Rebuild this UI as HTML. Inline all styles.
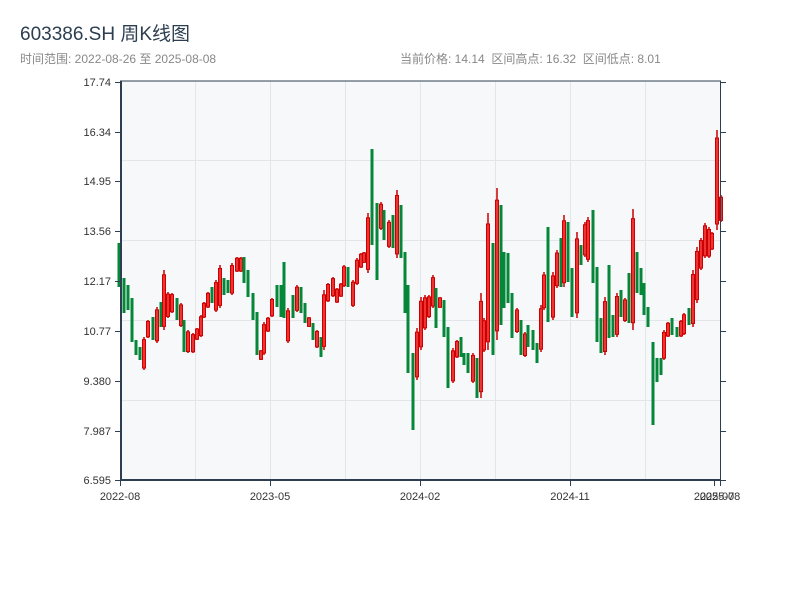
<!DOCTYPE html>
<html><head><meta charset="utf-8"><style>
html,body{margin:0;padding:0;background:#fff;width:800px;height:600px;overflow:hidden}
svg{display:block}
text{font-family:"Liberation Sans","Noto Sans CJK SC",sans-serif}
</style></head><body>
<svg id="s" width="800" height="600" xmlns="http://www.w3.org/2000/svg">
<text x="20" y="40" font-size="19" fill="#2c3e50">603386.SH 周K线图</text>
<text x="20" y="63" font-size="12" fill="#888">时间范围: 2022-08-26 至 2025-08-08</text>
<text x="400" y="63" font-size="12" fill="#888">当前价格: 14.14&#160;&#160;区间高点: 16.32&#160;&#160;区间低点: 8.01</text>
<rect x="120" y="81" width="600" height="399" fill="#f6f8fa"/>
<g stroke="#e2e5ea" stroke-width="1">
<line x1="195.5" y1="81" x2="195.5" y2="480"/><line x1="270.5" y1="81" x2="270.5" y2="480"/>
<line x1="345.5" y1="81" x2="345.5" y2="480"/><line x1="420.5" y1="81" x2="420.5" y2="480"/>
<line x1="495.5" y1="81" x2="495.5" y2="480"/><line x1="570.5" y1="81" x2="570.5" y2="480"/>
<line x1="645.5" y1="81" x2="645.5" y2="480"/>
<line x1="120" y1="160.5" x2="720" y2="160.5"/><line x1="120" y1="240.5" x2="720" y2="240.5"/>
<line x1="120" y1="320.5" x2="720" y2="320.5"/><line x1="120" y1="400.5" x2="720" y2="400.5"/>
</g>
<g id="c"></g>
<g stroke="#2c3e50">
<line x1="120" y1="81" x2="721" y2="81" stroke-width="1"/>
<line x1="720.5" y1="81" x2="720.5" y2="481" stroke-width="1"/>
<line x1="121" y1="81" x2="121" y2="481" stroke-width="2"/>
<line x1="120" y1="480" x2="721" y2="480" stroke-width="2"/>
</g>
<g id="ax" font-size="11" fill="#333"></g>
</svg>
<script>
var g=document.getElementById('c'),ax=document.getElementById('ax'),NS='http://www.w3.org/2000/svg';
function el(n,a,p){var e=document.createElementNS(NS,n);for(var k in a)e.setAttribute(k,a[k]);(p||g).appendChild(e);return e;}
var d=[
[119,'g',243,287],[124,'g',278,313],[128,'g',285,310],[132,'g',298,342],[136,'g',340,355],[140,'g',347,360],[144,'r',337,370],[148,'r',320,338],[153,'g',317,340],[157,'r',307,343],[161,'g',302,327],[164,'r',270,330],[168,'r',292,318],[172,'r',293,313],[177,'g',298,320],[181,'r',303,327],[184,'g',320,352],[188,'r',330,353],[193,'r',333,353],[197,'r',328,340],[201,'r',315,337],[204,'r',302,318],[208,'r',292,308],[212,'g',287,303],[216,'r',280,312],[220,'r',265,308],[224,'g',278,295],[228,'g',280,293],[232,'r',263,295],[237,'r',257,272],[241,'r',257,272],[244,'g',257,283],[248,'g',270,297],[253,'g',293,320],[257,'g',312,355],[261,'r',350,360],[264,'r',322,355],[268,'r',317,332],[272,'r',298,317],[277,'g',285,307],[281,'g',285,317],[284,'g',262,318],[288,'r',308,343],[293,'g',295,318],[297,'r',285,312],[301,'g',287,313],[305,'g',303,323],[309,'r',317,327],[313,'g',323,340],[317,'r',330,348],[321,'g',337,357],
[324,'r',290,350],[328,'r',283,302],[333,'r',277,297],[337,'r',288,303],[341,'r',283,297],[344,'r',265,287],[348,'g',267,287],[353,'r',280,307],[357,'r',258,285],[361,'r',253,268],[364,'r',252,263],[368,'r',213,273],[372,'g',149,245],[377,'g',203,280],[381,'r',202,230],[384,'g',210,240],[389,'r',220,248],[393,'g',215,248],[397,'r',190,258],[401,'g',205,258],[405,'g',252,313],[408,'g',285,373],[413,'g',353,430],[417,'r',328,380],[421,'r',297,350],[425,'r',295,330],[429,'r',295,318],[433,'r',275,308],[436,'g',288,328],[440,'r',297,308],[444,'g',300,337],[448,'g',327,388],[453,'r',348,383],[457,'r',340,358],[461,'g',337,357],[464,'g',353,365],[468,'g',353,373],[473,'r',353,383],[477,'g',358,398],[481,'r',293,398],[484,'r',318,352],[488,'r',213,350],[493,'g',243,355],[497,'r',188,340],[501,'g',205,325],[504,'g',252,308],[508,'g',253,303],
[512,'g',293,338],[517,'r',308,333],[521,'g',320,355],[525,'r',332,357],[528,'g',325,347],[533,'g',330,350],[537,'g',343,363],[541,'r',305,352],[544,'r',272,310],[548,'g',227,322],[553,'r',272,320],[557,'r',250,288],[561,'g',238,287],[564,'r',215,287],[568,'g',222,282],[572,'g',268,317],[577,'r',232,318],[581,'g',245,265],[585,'r',222,257],[588,'r',217,262],[593,'g',210,283],[597,'g',267,342],[601,'g',318,353],[605,'r',297,355],[609,'g',265,338],[613,'g',315,337],[617,'r',293,337],[621,'g',290,317],[625,'r',298,322],[629,'g',273,323],[633,'r',209,330],[637,'g',252,293],[641,'g',268,295],[644,'g',283,315],[648,'g',307,327],[653,'g',342,425],[657,'g',358,382],[661,'g',358,375],[664,'r',330,360],[668,'r',322,337],[672,'g',318,335],[677,'g',327,337],[681,'r',320,337],[684,'r',313,335],[689,'g',308,325],[693,'r',270,327],[697,'r',247,303],[701,'r',238,270],[705,'r',223,258],[709,'r',227,258],[712,'r',232,250],[717,'r',130,230],[721,'r',195,222]];
d.forEach(function(c){
  var h=Math.max(2,c[3]-c[2]);
  if(c[1]=='g'){el('rect',{x:c[0]-1.5,y:c[2],width:3,height:h,fill:'#05873a'});}
  else{
    var b1=c[2]+h*0.08,b2=c[3]-h*0.06;
    el('line',{x1:c[0],x2:c[0],y1:c[2],y2:c[3],stroke:'#cc0000','stroke-width':1.5});
    el('rect',{x:c[0]-1.5,y:b1,width:3,height:Math.max(2,b2-b1),fill:'#ee3333',stroke:'#cc0000','stroke-width':1});
  }
});
var yl=[[82,'17.74'],[132,'16.34'],[181,'14.95'],[231,'13.56'],[281,'12.17'],[331,'10.77'],[381,'9.380'],[431,'7.987'],[480,'6.595']];
yl.forEach(function(v){
  el('line',{x1:115,x2:120,y1:v[0]+.5,y2:v[0]+.5,stroke:'#2c3e50'},ax);
  el('line',{x1:721,x2:726,y1:v[0]+.5,y2:v[0]+.5,stroke:'#2c3e50'},ax);
  var t=el('text',{x:111,y:v[0]+4,'text-anchor':'end'},ax);t.textContent=v[1];
});
var xl=[[120,'2022-08'],[270,'2023-05'],[420,'2024-02'],[570,'2024-11'],[714,'2025-07'],[720,'2025-08']];
xl.forEach(function(v){
  el('line',{x1:v[0]+.5,x2:v[0]+.5,y1:480,y2:486,stroke:'#2c3e50'},ax);
  var t=el('text',{x:v[0],y:500,'text-anchor':'middle'},ax);t.textContent=v[1];
});
</script>
</body></html>
